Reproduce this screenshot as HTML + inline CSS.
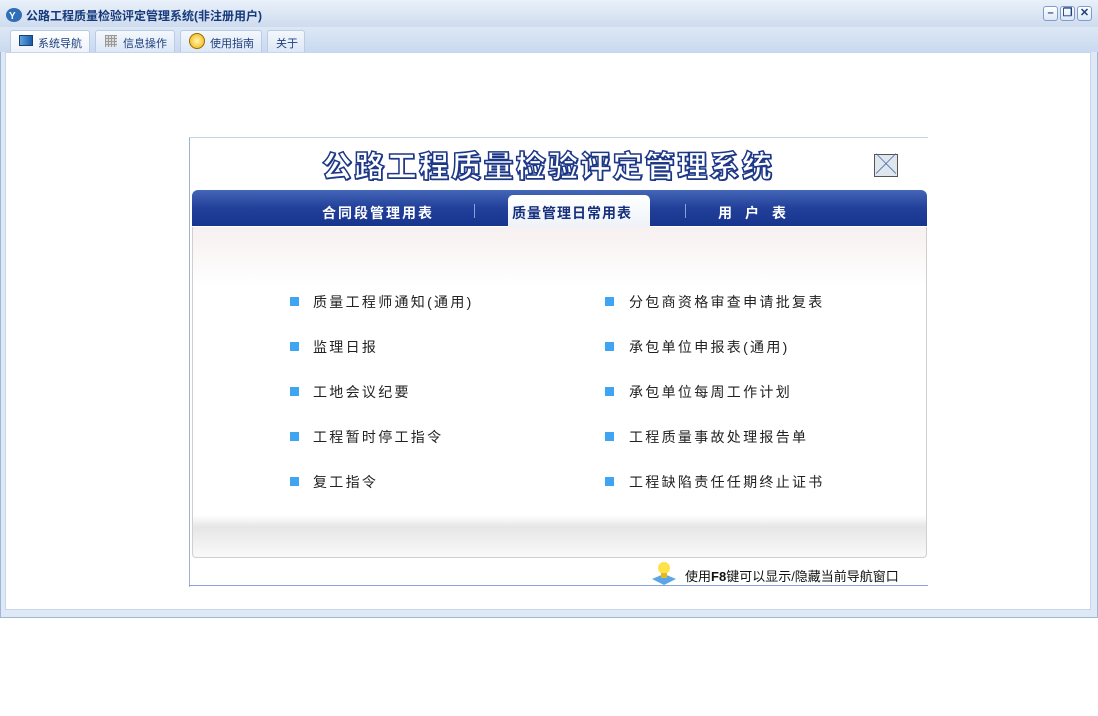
<!DOCTYPE html>
<html><head><meta charset="utf-8"><style>
*{margin:0;padding:0;box-sizing:border-box}
body{width:1098px;height:716px;background:#fff;position:relative;overflow:hidden;font-family:"Liberation Sans","Noto Sans CJK SC",sans-serif}
.abs{position:absolute}
.win{left:0;top:0;width:1098px;height:618px;background:#dfe9f6;border:1px solid #9fb6d8}
.title{left:0;top:0;width:1098px;height:27px;background:linear-gradient(#e9f0fa,#cfdcee);}
.title span{position:absolute;left:26px;top:7px;font-size:12px;font-weight:bold;color:#15397a}
.tabbar{left:0;top:27px;width:1098px;height:25px;background:linear-gradient(#dde8f6,#c9d9ef)}
.tab{position:absolute;top:30px;height:22px;border:1px solid #b9cbe5;border-bottom:none;border-radius:3px 3px 0 0;background:linear-gradient(#f4f8fd,#dce7f6);font-size:11px;color:#1d3f7c;padding-top:4px}
.content{left:5px;top:52px;width:1086px;height:558px;background:#fff;border:1px solid #c5d6ee}
.wb{position:absolute;top:6px;width:15px;height:15px;border:1px solid #7f9dc9;border-radius:3px;background:linear-gradient(#fff,#dce7f6);font-size:11px;line-height:13px;text-align:center;color:#1d3f7c;font-weight:bold}
.panel{left:189px;top:137px;width:739px;height:450px;background:#fff;border-left:1px solid #9eb1d6;border-top:1px solid #c9d3e8}
.ptitle{left:322px;top:142px;font-size:30px;font-weight:900;color:#fff;-webkit-text-stroke:1.5px #1d3787;letter-spacing:2.3px;text-shadow:1px 1px 0 #1d3787}
.blue{left:192px;top:190px;width:735px;height:36px;background:linear-gradient(#4466b8,#22409a 50%,#17358d);border-radius:6px 6px 0 0}
.bt{position:absolute;top:203px;font-size:14px;font-weight:bold;color:#fff;letter-spacing:2px}
.act{left:508px;top:195px;width:142px;height:32px;background:linear-gradient(#fff,#eef2f8);border-radius:5px 5px 0 0}
.body{left:192px;top:227px;width:735px;height:331px;border:1px solid #cfcfcf;border-top:none;border-radius:0 0 4px 4px;background:linear-gradient(#f7f0f0 0,#fff 60px,#fff 288px,#e6e6e6 300px,#fafafa 331px)}
.it{position:absolute;font-size:14px;color:#222;letter-spacing:2.3px}
.sq{position:absolute;width:9px;height:9px;background:#3fa5f2}
</style></head><body>
<div class="abs win"></div>
<div class="abs title"><span>公路工程质量检验评定管理系统(非注册用户)</span></div>
<svg class="abs" style="left:6px;top:7px" width="16" height="15"><ellipse cx="8" cy="8" rx="8" ry="7" fill="#2f6fb8"/><text x="3" y="12" font-size="10" fill="#fff" font-weight="bold">Y</text></svg>
<div class="wb" style="left:1043px">–</div><div class="wb" style="left:1060px">❐</div><div class="wb" style="left:1077px">✕</div>
<div class="abs tabbar"></div>
<div class="tab" style="left:10px;width:80px;background:linear-gradient(#fff,#eef3fa)"><span style="position:absolute;left:8px;top:4px;width:14px;height:11px;border:1px solid #1b3f7a;background:linear-gradient(90deg,#5fa4e0,#1a5aa8)"></span><span style="position:absolute;left:27px;top:4px">系统导航</span></div>
<div class="tab" style="left:95px;width:80px"><span style="position:absolute;left:9px;top:4px;width:12px;height:12px;background:repeating-linear-gradient(90deg,#999 0 1px,transparent 1px 3px),repeating-linear-gradient(#999 0 1px,#ddd 1px 3px)"></span><span style="position:absolute;left:27px;top:4px">信息操作</span></div>
<div class="tab" style="left:180px;width:82px"><span style="position:absolute;left:8px;top:2px;width:16px;height:16px;border-radius:50%;background:radial-gradient(#fff6b0,#f0b000);border:1px solid #9a6a00"></span><span style="position:absolute;left:29px;top:4px">使用指南</span></div>
<div class="tab" style="left:267px;width:38px"><span style="position:absolute;left:8px;top:4px">关于</span></div>
<div class="abs content"></div>
<div class="abs panel"></div>
<div class="abs" style="left:189px;top:585px;width:739px;height:1px;background:#8aa3d8"></div>
<div class="abs ptitle">公路工程质量检验评定管理系统</div>
<div class="abs" style="left:874px;top:154px;width:24px;height:23px;border:1px solid #555;background:#dfe6ee;font-size:20px;line-height:20px;text-align:center;color:#4a6ea8">╳</div>
<div class="abs blue"></div>
<div class="abs act"></div>
<div class="bt" style="left:322px">合同段管理用表</div>
<div class="abs" style="left:474px;top:204px;width:1px;height:14px;background:#8aa0d6"></div>
<div class="bt" style="left:512px;color:#15307f;letter-spacing:1px">质量管理日常用表</div>
<div class="abs" style="left:685px;top:204px;width:1px;height:14px;background:#8aa0d6"></div>
<div class="bt" style="left:718px;letter-spacing:13px">用户表</div>
<div class="abs body"></div>
<div class="sq" style="left:290px;top:297px"></div><div class="it" style="left:313px;top:292px">质量工程师通知(通用)</div>
<div class="sq" style="left:290px;top:342px"></div><div class="it" style="left:313px;top:337px">监理日报</div>
<div class="sq" style="left:290px;top:387px"></div><div class="it" style="left:313px;top:382px">工地会议纪要</div>
<div class="sq" style="left:290px;top:432px"></div><div class="it" style="left:313px;top:427px">工程暂时停工指令</div>
<div class="sq" style="left:290px;top:477px"></div><div class="it" style="left:313px;top:472px">复工指令</div>
<div class="sq" style="left:605px;top:297px"></div><div class="it" style="left:629px;top:292px">分包商资格审查申请批复表</div>
<div class="sq" style="left:605px;top:342px"></div><div class="it" style="left:629px;top:337px">承包单位申报表(通用)</div>
<div class="sq" style="left:605px;top:387px"></div><div class="it" style="left:629px;top:382px">承包单位每周工作计划</div>
<div class="sq" style="left:605px;top:432px"></div><div class="it" style="left:629px;top:427px">工程质量事故处理报告单</div>
<div class="sq" style="left:605px;top:477px"></div><div class="it" style="left:629px;top:472px">工程缺陷责任任期终止证书</div>
<svg class="abs" style="left:650px;top:560px" width="28" height="26"><path d="M2 19 L14 14 L26 19 L14 25 Z" fill="#5aa6e8"/><circle cx="14" cy="8" r="6" fill="#ffe24a"/><rect x="11" y="13" width="6" height="5" fill="#e8b820"/></svg>
<div class="abs" style="left:685px;top:566px;font-size:13px;color:#111">使用<b>F8</b>键可以显示/隐藏当前导航窗口</div>
</body></html>
